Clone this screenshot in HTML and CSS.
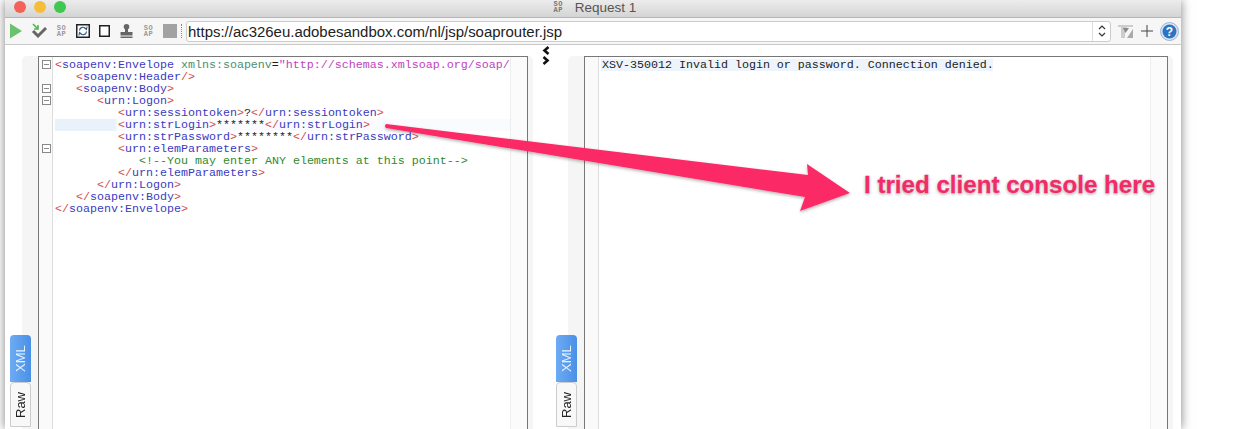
FILE: index.html
```html
<!DOCTYPE html>
<html lang="en">
<head>
<meta charset="utf-8">
<title>Request 1</title>
<link rel="stylesheet" href="styles.css">
</head>
<body>
<div class="window">
  <header class="titlebar">
    <div class="lights"><i class="light red"></i><i class="light yellow"></i><i class="light green"></i></div>
    <div class="title"><span class="soap tiny">SO<br>AP</span><span>Request 1</span></div>
  </header>
  <div class="toolbar">
    <svg class="ic play" width="14" height="16" viewBox="0 0 14 16"><path d="M1 0.5L13 8L1 15.5Z" fill="#6cc16c"/></svg>
    <svg class="ic check" width="16" height="16" viewBox="0 0 16 16"><path d="M2 8L7 13L15 5" fill="none" stroke="#666" stroke-width="3"/><path d="M2 1L7 6M7 2V6H3" fill="none" stroke="#55b455" stroke-width="1.6"/></svg>
    <span class="soap">SO<br>AP</span>
    <svg class="ic" width="14" height="14" viewBox="0 0 14 14"><rect x=".75" y=".75" width="12.5" height="12.5" fill="#fff" stroke="#222" stroke-width="1.5"/><path d="M3.5 6.500A3.500 3.500 0 0 1 10 5M8 3.500L10.500 5.500L11 2.500M10.500 7.500A3.500 3.500 0 0 1 4 9M6 10.500L3.500 8.500L3 11.500" fill="none" stroke="#2f5f8e" stroke-width="1.100"/></svg>
    <svg class="ic" width="11" height="12" viewBox="0 0 11 12"><rect x=".75" y=".75" width="9.500" height="10.500" fill="#fff" stroke="#222" stroke-width="1.500"/></svg>
    <svg class="ic stamp" width="13" height="14" viewBox="0 0 13 14"><circle cx="6.500" cy="2.800" r="2.800" fill="#666"/><path d="M5 4H8V8H12.500V11.500H.500V8H5ZM.500 12.500H12.500V14H.500Z" fill="#666"/></svg>
    <span class="soap soap-b">SO<br>AP</span>
    <i class="stop"></i>
    <i class="grip"></i>
    <div class="url"><span class="url-text">https://ac326eu.adobesandbox.com/nl/jsp/soaprouter.jsp</span><span class="stepper"><svg width="8" height="14" viewBox="0 0 8 14"><path d="M1 5L4 2L7 5M1 9L4 12L7 9" fill="none" stroke="#333" stroke-width="1.200"/></svg></span></div>
    <svg class="ic tool-a" width="15" height="13" viewBox="0 0 15 13"><path d="M0 0H15V2H9L7 6V13H3V2H0Z" fill="#ccc"/><path d="M9 13L15 4V13Z" fill="#aaa"/><path d="M5 3H11L7.500 8Z" fill="#888"/></svg>
    <svg class="ic tool-b" width="12" height="12" viewBox="0 0 12 12"><path d="M0 6H12M6 0V12" stroke="#444" stroke-width="1"/></svg>
    <svg class="ic tool-c" width="19" height="19" viewBox="0 0 19 19"><circle cx="9.500" cy="9.500" r="9" fill="#dbe6f2" stroke="#9db4cb"/><circle cx="9.500" cy="9.500" r="7" fill="#2d74c4"/><text x="9.500" y="13.500" class="help">?</text></svg>
  </div>
  <main class="panes">
    <section class="pane">
      <div class="tabs"><span class="tab on">XML</span><span class="tab">Raw</span></div>
      <div class="editor">
        <div class="gutter"><i class="fold f1"></i><i class="fold f2"></i><i class="fold f3"></i><i class="fold f4"></i></div>
        <div class="code">
          <div class="ln"><b>&lt;</b><u>soapenv:Envelope</u> <em>xmlns:soapenv</em>=<s>"http://schemas.xmlsoap.org/soap/</s></div>
          <div class="ln d1"><b>&lt;</b><u>soapenv:Header</u><b>/&gt;</b></div>
          <div class="ln d1"><b>&lt;</b><u>soapenv:Body</u><b>&gt;</b></div>
          <div class="ln d2"><b>&lt;</b><u>urn:Logon</u><b>&gt;</b></div>
          <div class="ln d3"><b>&lt;</b><u>urn:sessiontoken</u><b>&gt;</b>?<b>&lt;/</b><u>urn:sessiontoken</u><b>&gt;</b></div>
          <div class="ln d3 cur"><b>&lt;</b><u>urn:strLogin</u><b>&gt;</b>*******<b>&lt;/</b><u>urn:strLogin</u><b>&gt;</b></div>
          <div class="ln d3"><b>&lt;</b><u>urn:strPassword</u><b>&gt;</b>********<b>&lt;/</b><u>urn:strPassword</u><b>&gt;</b></div>
          <div class="ln d3"><b>&lt;</b><u>urn:elemParameters</u><b>&gt;</b></div>
          <div class="ln d4 cmt">&lt;!--You may enter ANY elements at this point--&gt;</div>
          <div class="ln d3"><b>&lt;/</b><u>urn:elemParameters</u><b>&gt;</b></div>
          <div class="ln d2"><b>&lt;/</b><u>urn:Logon</u><b>&gt;</b></div>
          <div class="ln d1"><b>&lt;/</b><u>soapenv:Body</u><b>&gt;</b></div>
          <div class="ln"><b>&lt;/</b><u>soapenv:Envelope</u><b>&gt;</b></div>
        </div>
        <div class="band"></div>
      </div>
    </section>
    <div class="splitter"><svg width="8" height="19" viewBox="0 0 8 19"><path d="M6.500 1L2.500 4.500L6.500 8" fill="none" stroke="#111" stroke-width="2.600"/><path d="M1.500 11L5.500 14.500L1.500 18" fill="none" stroke="#111" stroke-width="2.600"/></svg></div>
    <section class="pane right">
      <div class="tabs"><span class="tab on">XML</span><span class="tab">Raw</span></div>
      <div class="editor">
        <div class="gutter"></div>
        <div class="code"><div class="ln plain">XSV-350012 Invalid login or password. Connection denied.</div></div>
        <div class="band"></div>
      </div>
    </section>
  </main>
</div>
<svg class="arrow" width="1246" height="429" viewBox="0 0 1246 429">
  <defs><filter id="sh" x="-5%" y="-20%" width="110%" height="140%"><feDropShadow dx="0" dy="1.500" stdDeviation="1.500" flood-color="#000" flood-opacity=".3"/></filter></defs>
  <path d="M386 124L808 175L807 164L850 193L800 211L805 197L386 128Q384 126 386 124Z" fill="#fb2c66" filter="url(#sh)"/>
</svg>
<div class="note">I tried client console here</div>
</body>
</html>
```
FILE: styles.css
```css
html, body { margin: 0; padding: 0; background: #fff; overflow: hidden; }
body { width: 1246px; height: 429px; position: relative; font-family: "Liberation Sans", sans-serif; }
.window {
  width: 1176px; height: 429px; margin-left: 5px; background: #fff;
  display: flex; flex-direction: column; box-shadow: 0 0 10px rgba(0,0,0,.5);
}
.titlebar {
  height: 17px; flex: none; display: flex; align-items: center; position: relative;
  background: linear-gradient(#ececec, #d4d4d4); border-bottom: 1px solid #b5b5b5;
}
.lights { display: flex; gap: 8px; padding-left: 9px; margin-top: -3px; }
.light { width: 12px; height: 12px; border-radius: 50%; }
.red { background: #f4605a; }
.yellow { background: #f6bd3b; }
.green { background: #3fc74f; }
.title { flex: 1; display: flex; justify-content: center; align-items: center; gap: 11px; font-size: 13.500px; color: #555; margin-top: -3px; padding-right: 58px; }
.soap { font: bold 7px/6px "Liberation Mono", monospace; color: #999; letter-spacing: .5px; text-align: center; width: 11px; flex: none; }
.soap.tiny { color: #777; font-size: 7px; }
.toolbar {
  height: 26px; flex: none; display: flex; align-items: center; gap: 9px; padding: 0 0 0 4px;
  background: #f6f6f6; border-bottom: 1px solid #c8c8c8;
}
.ic { flex: none; display: block; }
.check { margin-left: -1px; }
.stamp { margin-left: 1px; }
.soap-b { margin-left: 1px; }
.stop { width: 14px; height: 14px; background: #a2a2a2; flex: none; }
.grip { width: 1px; height: 14px; border-left: 1px dotted #888; margin: 0 -6px 0 -5px; flex: none; }
.url {
  width: 925px; height: 21px; flex: none; display: flex; justify-content: space-between; align-items: center;
  background: #fff; border: 1px solid #ccc; border-radius: 3px; box-sizing: border-box;
}
.url-text { font-size: 14.960px; color: #222; padding-left: 1px; white-space: nowrap; }
.stepper { width: 17px; height: 19px; border-left: 1px solid #ddd; display: flex; align-items: center; justify-content: center; }
.tool-a { margin-left: -2px; }
.tool-b { margin-left: -1px; }
.tool-c { margin-left: -2px; }
.help { font: bold 12px "Liberation Sans", sans-serif; fill: #fff; text-anchor: middle; }
.panes { flex: 1; min-height: 0; display: flex; background: #fff; padding: 11px 7px 0 17px; }
.pane { width: 511px; flex: none; display: flex; background: #f5f5f5; border-radius: 5px 5px 0 0; padding: 0 5px 0 0; box-sizing: border-box; position: relative; }
.pane.right { width: 605px; }
.splitter { width: 36px; flex: none; display: flex; justify-content: center; margin: -10px 0 0 -1px; height: 20px; }
.splitter svg { margin-left: -9px; }
.tabs { position: absolute; left: -12px; bottom: 2px; display: flex; flex-direction: column; width: 21px; }
.tab {
  writing-mode: vertical-rl; transform: rotate(180deg); font-size: 13px; height: 45px; width: 21px; box-sizing: border-box;
  display: flex; align-items: center; justify-content: center; background: #f8f8f8; color: #222; border: 1px solid #ccc; border-radius: 0 0 4px 4px;
}
.tab.on { height: 47px; background: linear-gradient(270deg, #6dabf3, #4a90e8); color: #e6f1ff; border: 0; }
.editor { flex: 1; margin: 0 0 0 16px; display: flex; background: #fff; border: 1px solid #777; border-bottom: 0; min-width: 0; }
.gutter { width: 13px; flex: none; background: #fafafa; border-right: 1px solid #ddd; position: relative; }
.fold { position: absolute; left: 3px; width: 7px; height: 7px; border: 1px solid #888; background: linear-gradient(#888,#888) center/5px 1px no-repeat #fff; }
.f1 { top: 3px; }
.f2 { top: 27px; }
.f3 { top: 39px; }
.f4 { top: 87px; }
.code { flex: 1; min-width: 0; padding: 2px 0 0 2px; overflow: hidden; font: 11.670px/12px "Liberation Mono", monospace; color: #222; }
.ln { white-space: pre; height: 12px; }
.d1 { padding-left: 21px; } .d2 { padding-left: 42px; } .d3 { padding-left: 63px; } .d4 { padding-left: 84px; }
.cur { background: linear-gradient(90deg, #e9f1fb 60px, #f9fbfe 62px); }
.plain { background: #eef4fc; padding-left: 1px; width: 391px; }
.ln b { font-weight: normal; color: #d24a4a; }
.ln u { text-decoration: none; color: #3b3bbf; }
.ln em { font-style: normal; color: #4a8f74; }
.ln s { text-decoration: none; color: #c03fc0; }
.cmt { color: #2f8a2f; }
.band { width: 16px; flex: none; background: #fbfbfb; border-left: 1px solid #eee; }
.arrow { position: absolute; left: 0; top: 0; pointer-events: none; }
.note {
  position: absolute; left: 864px; top: 171px; font-size: 24.150px; font-weight: bold; color: #ef2c68; white-space: nowrap;
  -webkit-text-stroke: .3px #ef2c68;
  text-shadow: 0 0 2px #fff, 0 0 2px #fff, 0 1px 3px rgba(0,0,0,.5);
}
```
